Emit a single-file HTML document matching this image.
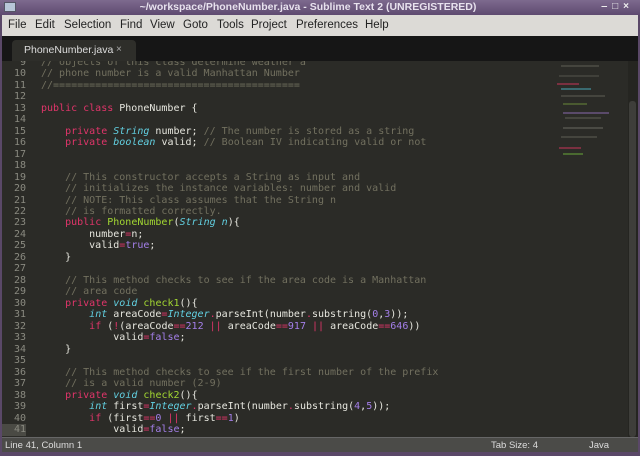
<!DOCTYPE html>
<html><head><meta charset="utf-8"><style>
*{margin:0;padding:0;box-sizing:border-box}
body{width:640px;height:456px;overflow:hidden;background:#5a4868;font-family:"Liberation Sans",sans-serif;position:relative}
#title{position:absolute;left:0;top:0;width:640px;height:15px;background:linear-gradient(#7d6a8e,#5e4a70);color:#e8e2ee;font-size:10.5px;font-weight:bold;line-height:14px}
#title .tt{position:absolute;left:128px;width:360px;text-align:center;white-space:nowrap}
#title .ico{position:absolute;left:4px;top:2px;width:12px;height:10px;background:#b8c6d8;border:1px solid #556}
#title .btns{position:absolute;right:6px;top:0;font-size:10px;color:#eee;letter-spacing:5px}
#menu{position:absolute;left:2px;top:15px;width:636px;height:21px;background:#dcdad6;font-size:11.5px;color:#222;line-height:21px}
#menu span{position:absolute;top:0}
#tabs{position:absolute;left:2px;top:36px;width:636px;height:25px;background:#161616}
#tab{position:absolute;left:10px;top:4px;width:124px;height:21px;background:#2e2e2a;border-radius:4px 4px 0 0;color:#ddd;font-size:10.5px;line-height:20px;padding-left:12px}
#tab .x{position:absolute;left:104px;color:#aaa;font-size:10px}
#ed{position:absolute;left:2px;top:61px;width:636px;height:376px;background:#2b2b27;overflow:hidden}
#code{position:absolute;left:0;top:-4.3px;font-family:"DejaVu Sans Mono",monospace;font-size:10px;line-height:11.48px;color:#e6e6de;white-space:pre}
.ln{display:inline-block;width:24px;text-align:right;color:#8a8a80;margin-right:15px}
.cur{background:#4a4a44}
.c{color:#72705f}.k{color:#e0356a}.t{color:#62cfe0;font-style:italic}.f{color:#a2d632}.n{color:#a47fea}
#mini{position:absolute;left:553px;top:0;width:72px;height:376px;background:#2b2b27}
#mini div{position:absolute;height:2px}
#scroll{position:absolute;left:626px;top:0;width:10px;height:376px;background:#252521}
#thumb{position:absolute;left:627px;top:40px;width:7px;height:336px;background:#3e3e3a;border-radius:3px}
#status{position:absolute;left:2px;top:437px;width:636px;height:15px;background:#4b4b48;color:#ddd;font-size:9.5px;line-height:15px;padding-left:3px;border-top:1px solid #666}
#status .r1{position:absolute;left:489px}
#status .r2{position:absolute;left:587px}
</style></head><body>
<div id="title"><div class="ico"></div><span class="tt">~/workspace/PhoneNumber.java - Sublime Text 2 (UNREGISTERED)</span><span class="btns">‒□×</span></div>
<div id="menu"><span style="left:6px">File</span><span style="left:33px">Edit</span><span style="left:62px">Selection</span><span style="left:118px">Find</span><span style="left:148px">View</span><span style="left:181px">Goto</span><span style="left:215px">Tools</span><span style="left:249px">Project</span><span style="left:294px">Preferences</span><span style="left:363px">Help</span></div>
<div id="tabs"><div id="tab">PhoneNumber.java<span class="x">×</span></div></div>
<div id="ed">
<div id="code"><span class="ln">9</span><span class="c">// objects of this class determine weather a</span>
<span class="ln">10</span><span class="c">// phone number is a valid Manhattan Number</span>
<span class="ln">11</span><span class="c">//=========================================</span>
<span class="ln">12</span>
<span class="ln">13</span><span class="k">public class</span> PhoneNumber {
<span class="ln">14</span>
<span class="ln">15</span>    <span class="k">private</span> <span class="t">String</span> number; <span class="c">// The number is stored as a string</span>
<span class="ln">16</span>    <span class="k">private</span> <span class="t">boolean</span> valid; <span class="c">// Boolean IV indicating valid or not</span>
<span class="ln">17</span>
<span class="ln">18</span>
<span class="ln">19</span>    <span class="c">// This constructor accepts a String as input and</span>
<span class="ln">20</span>    <span class="c">// initializes the instance variables: number and valid</span>
<span class="ln">21</span>    <span class="c">// NOTE: This class assumes that the String n</span>
<span class="ln">22</span>    <span class="c">// is formatted correctly.</span>
<span class="ln">23</span>    <span class="k">public</span> <span class="f">PhoneNumber</span>(<span class="t">String</span> <span class="t">n</span>){
<span class="ln">24</span>        number<span class="k">=</span>n;
<span class="ln">25</span>        valid<span class="k">=</span><span class="n">true</span>;
<span class="ln">26</span>    }
<span class="ln">27</span>
<span class="ln">28</span>    <span class="c">// This method checks to see if the area code is a Manhattan</span>
<span class="ln">29</span>    <span class="c">// area code</span>
<span class="ln">30</span>    <span class="k">private</span> <span class="t">void</span> <span class="f">check1</span>(){
<span class="ln">31</span>        <span class="t">int</span> areaCode<span class="k">=</span><span class="t">Integer</span><span class="k">.</span>parseInt(number<span class="k">.</span>substring(<span class="n">0</span>,<span class="n">3</span>));
<span class="ln">32</span>        <span class="k">if</span> (<span class="k">!</span>(areaCode<span class="k">==</span><span class="n">212</span> <span class="k">||</span> areaCode<span class="k">==</span><span class="n">917</span> <span class="k">||</span> areaCode<span class="k">==</span><span class="n">646</span>))
<span class="ln">33</span>            valid<span class="k">=</span><span class="n">false</span>;
<span class="ln">34</span>    }
<span class="ln">35</span>
<span class="ln">36</span>    <span class="c">// This method checks to see if the first number of the prefix</span>
<span class="ln">37</span>    <span class="c">// is a valid number (2-9)</span>
<span class="ln">38</span>    <span class="k">private</span> <span class="t">void</span> <span class="f">check2</span>(){
<span class="ln">39</span>        <span class="t">int</span> first<span class="k">=</span><span class="t">Integer</span><span class="k">.</span>parseInt(number<span class="k">.</span>substring(<span class="n">4</span>,<span class="n">5</span>));
<span class="ln">40</span>        <span class="k">if</span> (first<span class="k">==</span><span class="n">0</span> <span class="k">||</span> first<span class="k">==</span><span class="n">1</span>)
<span class="ln cur">41</span>            valid<span class="k">=</span><span class="n">false</span>;
<span class="ln">42</span>
</div>
<div id="mini">
<div style="left:6px;top:4px;width:38px;background:#45453e"></div>
<div style="left:4px;top:14px;width:40px;background:#40403a"></div>
<div style="left:2px;top:22px;width:22px;background:#7a3040"></div>
<div style="left:6px;top:27px;width:30px;background:#3a6a70"></div>
<div style="left:6px;top:34px;width:44px;background:#45453e"></div>
<div style="left:8px;top:42px;width:24px;background:#4a5a30"></div>
<div style="left:8px;top:51px;width:46px;background:#5a4a6a"></div>
<div style="left:10px;top:56px;width:36px;background:#45453e"></div>
<div style="left:8px;top:66px;width:40px;background:#4a4a44"></div>
<div style="left:6px;top:75px;width:36px;background:#45453e"></div>
<div style="left:4px;top:86px;width:22px;background:#7a3040"></div>
<div style="left:8px;top:92px;width:20px;background:#4a6a30"></div>
</div>
<div id="scroll"></div><div id="thumb"></div>
</div>
<div id="status">Line 41, Column 1<span class="r1">Tab Size: 4</span><span class="r2">Java</span></div>
</body></html>
